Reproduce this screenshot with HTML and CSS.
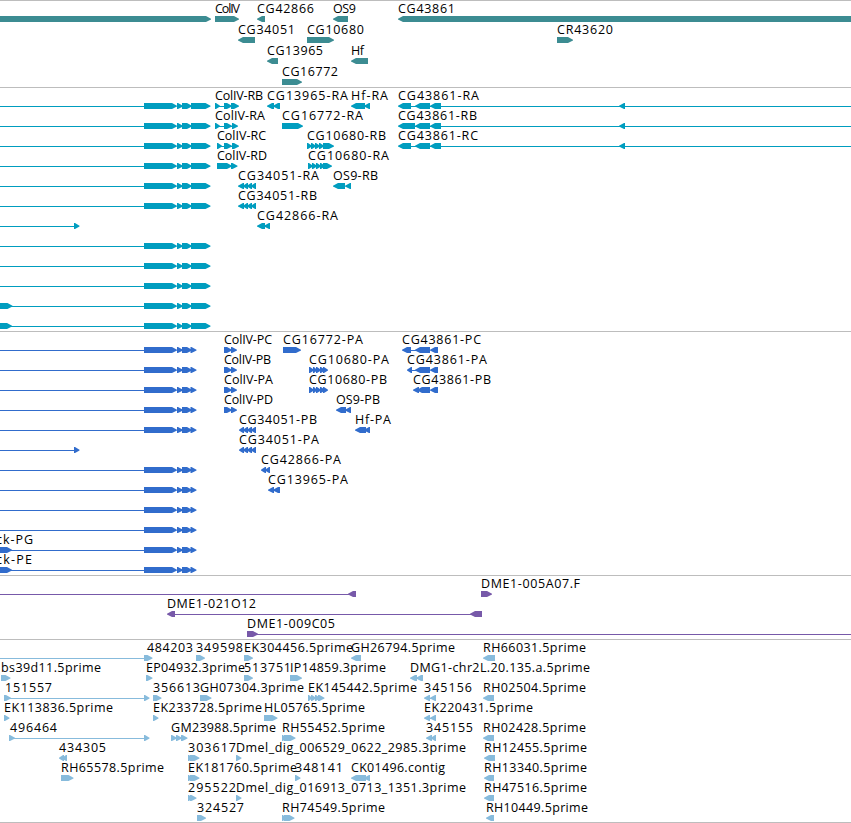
FILE: index.html
```html
<!DOCTYPE html>
<html lang="en">
<head>
<meta charset="utf-8">
<title>Genome browser</title>
<link rel="stylesheet" href="styles.css">
</head>
<body>
<main class="browser">
  <section class="track genes" data-track="genes" data-pitch="21"></section>
  <section class="track transcripts" data-track="transcripts" data-pitch="20"></section>
  <section class="track proteins" data-track="proteins" data-pitch="20"></section>
  <section class="track clones" data-track="clones" data-pitch="20"></section>
  <section class="track ests" data-track="ests" data-pitch="20"></section>
</main>
<script src="tracks.js"></script>
</body>
</html>
```
FILE: styles.css
```css
body {
  margin: 0;
  background: #fff;
  overflow: hidden;
}

.browser {
  display: flex;
  flex-direction: column;
  width: 851px;
  height: 823px;
  overflow: hidden;
}

.track {
  box-sizing: border-box;
  border-top: 1px solid #bdbdbd;
  overflow: hidden;
}

.track svg {
  display: block;
  width: 851px;
  height: 100%;
}

.genes { height: 87px; color: #3c8c92; }
.transcripts { height: 244px; color: #009dbf; }
.proteins { height: 244px; color: #316ccc; }
.clones { height: 64px; color: #7759a9; }
.ests { height: 184px; color: #87bbdc; border-bottom: 1px solid #bdbdbd; }

.glyph { fill: currentColor; }

.label {
  fill: #000;
  font-family: "Open Sans", "Noto Sans", sans-serif;
  font-size: 12.5px;
}
```
FILE: tracks.js
```js
// Shapes: "a>b" forward block, "a<b" reverse block, "a-b" intron line.
// Labels: [text, start, end]. Each row is [shapes, ...labels].
const exons = "0-144 144>177 177>183 182>192 191>210.5";
const cds = "0-144 144>177 177>183 182>192 190.5>196.5";

const tracks = {
  genes: [
    ["-10>211 215>239 257<265 333<348 398<870", ["ColIV", 215, 240], ["CG42866", 257, 314], ["OS9", 333, 356], ["CG43861", 398, 455]],
    ["238<255 307>334 557>573", ["CG34051", 238, 295], ["CG10680", 307, 364], ["CR43620", 557, 613]],
    ["267<278 351<368", ["CG13965", 267, 323], ["Hf", 351, 364]],
    ["282>302", ["CG16772", 282, 338]]
  ],
  transcripts: [
    [exons + " 215-232 215>220 224>232 231>239 267<274 273<280 351<365 364<370 398<411 411-851 415<430 430<441 619<625", ["ColIV-RB", 215, 263], ["CG13965-RA", 267, 348], ["Hf-RA", 351, 388], ["CG43861-RA", 398, 479]],
    [exons + " 215-232 215>220 224>232 232>238 282>285 283>303 398<415 411-851 415<430 430<441 619<625", ["ColIV-RA", 215, 265], ["CG16772-RA", 282, 363], ["CG43861-RB", 398, 477]],
    [exons + " 217-232 217>222 224>232 232>239 307>312 311>316 315>320 319>324 323>334 398<411 411-851 415<430 430<441 619<625", ["ColIV-RC", 217, 266], ["CG10680-RB", 307, 386], ["CG43861-RC", 398, 478]],
    [exons + " 217>232 231>237.5 308>313 312>317 316>321 320>325 323>332", ["ColIV-RD", 217, 267], ["CG10680-RA", 308, 389]],
    [exons + " 238<244 243<248 247<252 251<256 333<345 345<351", ["CG34051-RA", 238, 319], ["OS9-RB", 333, 378]],
    [exons + " 238<244 243<248 247<252 251<256", ["CG34051-RB", 238, 317]],
    ["0-74 74>79.5 257<265 264<270", ["CG42866-RA", 257, 338]],
    [exons], [exons], [exons],
    [exons + " -10>12.5"],
    [exons + " -10>12"]
  ],
  proteins: [
    [cds + " 224>232 231>237 283>301 402<411 411-430 415<430 430<438", ["ColIV-PC", 224, 272], ["CG16772-PA", 283, 363], ["CG43861-PC", 402, 481]],
    [cds + " 224>232 231>237 309>314 313>317 316>321 320>325 323>328 407<412 411-430 415<430 430<438", ["ColIV-PB", 224, 271], ["CG10680-PA", 309, 389], ["CG43861-PA", 407, 487]],
    [cds + " 224>232 231>237 309>314 313>317 316>321 320>325 323>328 413<419 417<430 430<438", ["ColIV-PA", 224, 273], ["CG10680-PB", 309, 387], ["CG43861-PB", 413, 491]],
    [cds + " 224>232 231>237 336<346 345<351", ["ColIV-PD", 224, 273], ["OS9-PB", 336, 380]],
    [cds + " 239<244 243<248 247<252 251<256 355<366 364<370", ["CG34051-PB", 239, 317], ["Hf-PA", 355, 391]],
    ["0-74 74>79.5 239<244 243<248 247<252 251<256", ["CG34051-PA", 239, 319]],
    [cds + " 261<266 265<270", ["CG42866-PA", 261, 341]],
    [cds + " 268<274 273<280", ["CG13965-PA", 268, 348]],
    [cds], [cds],
    [cds + " -10>12", ["ck-PG", -4, 33]],
    [cds + " -10>12", ["ck-PE", -4, 32]]
  ],
  clones: [
    ["0-350 348<356 481>492", ["DME1-005A07.F", 481, 580]],
    ["167<175 175-475 470<482", ["DME1-021O12", 167, 256]],
    ["247>258 257-851", ["DME1-009C05", 247, 335]]
  ],
  ests: [
    ["0-144 144>152.5 196>205 244>253 351<361 483<495", ["484203", 147, 193], ["349598", 196, 243], ["EK304456.5prime", 244, 353], ["GH26794.5prime", 351, 455], ["RH66031.5prime", 483, 586]],
    ["1>10.5 146>152.5 244>253 290>302 410<417 416<423", ["bs39d11.5prime", 1, 101], ["EP04932.3prime", 146, 245], ["513751", 244, 291], ["IP14859.3prime", 290, 386], ["DMG1-chr2L.20.135.a.5prime", 410, 590]],
    ["4>11 9-144 144>149.5 153>161.5 200>211.5 308>312 311>316 315>320 318>324.5 424<430 430-432 430<436 483<494", ["151557", 5, 52], ["356613", 153, 200], ["GH07304.3prime", 200, 304], ["EK145442.5prime", 308, 417], ["345156", 424, 472], ["RH02504.5prime", 483, 586]],
    ["4>9.5 153>158.5 264>277.5 424<430 430-432 430<436", ["EK113836.5prime", 4, 113], ["EK233728.5prime", 153, 262], ["HL05765.5prime", 264, 365], ["EK220431.5prime", 424, 533]],
    ["9>15 14-144 144>149.5 171>177 176>182 181>187.5 282>286 284>295.5 426<432 431<436 483<494", ["496464", 10, 57], ["GM23988.5prime", 171, 276], ["RH55452.5prime", 282, 385], ["345155", 426, 473], ["RH02428.5prime", 483, 586]],
    ["59<64 62<67 188>193 190>199.5 236>241.5 484<495", ["434305", 59, 106], ["303617", 188, 236], ["Dmel_dig_006529_0622_2985.3prime", 236, 466], ["RH12455.5prime", 484, 587]],
    ["61>73.5 188>192 190>199.5 295>300.5 351<366 364<370 484<494", ["RH65578.5prime", 61, 164], ["EK181760.5prime", 188, 297], ["348141", 295, 343], ["CK01496.contig", 351, 445], ["RH13340.5prime", 484, 587]],
    ["188>192 190>196.5 236>241.5 484<494", ["295522", 188, 236], ["Dmel_dig_016913_0713_1351.3prime", 236, 466], ["RH47516.5prime", 484, 587]],
    ["197>206 282>286 284>294.5 486<494", ["324527", 197, 244], ["RH74549.5prime", 282, 385], ["RH10449.5prime", 486, 588]]
  ]
};

const NS = "http://www.w3.org/2000/svg";

function add(parent, name, attrs) {
  const node = document.createElementNS(NS, name);
  for (const key in attrs) node.setAttribute(key, attrs[key]);
  parent.appendChild(node);
  return node;
}

function drawShape(svg, spec, y) {
  const [, start, kind, end] = spec.match(/^(-?[\d.]+)([<>-])([\d.]+)$/);
  const a = Number(start), b = Number(end);
  if (kind === "-") {
    add(svg, "rect", { class: "glyph", x: a, y: y + 3, width: b - a, height: 1 });
    return;
  }
  const head = Math.min(6, b - a);
  const top = y, mid = y + 3, low = y + 6;
  const s = kind === ">" ? 1 : -1;
  const tail = s > 0 ? a : b, tip = s > 0 ? b : a;
  const neck = tip - s * head;
  add(svg, "polygon", {
    class: "glyph",
    points: `${tail},${top} ${neck + s},${top} ${tip},${mid - 0.2} ${tip},${mid + 0.4} ${neck + s},${low} ${tail},${low}`
  });
}

for (const section of document.querySelectorAll(".track")) {
  const pitch = Number(section.dataset.pitch);
  const svg = add(section, "svg", {});
  tracks[section.dataset.track].forEach(([shapes, ...labels], row) => {
    const y = row * pitch;
    for (const spec of shapes.split(" ")) drawShape(svg, spec, y + 15);
    for (const [text, from, to] of labels) {
      add(svg, "text", { class: "label", x: from, y: y + 12, textLength: to - from }).textContent = text;
    }
  });
}
```
